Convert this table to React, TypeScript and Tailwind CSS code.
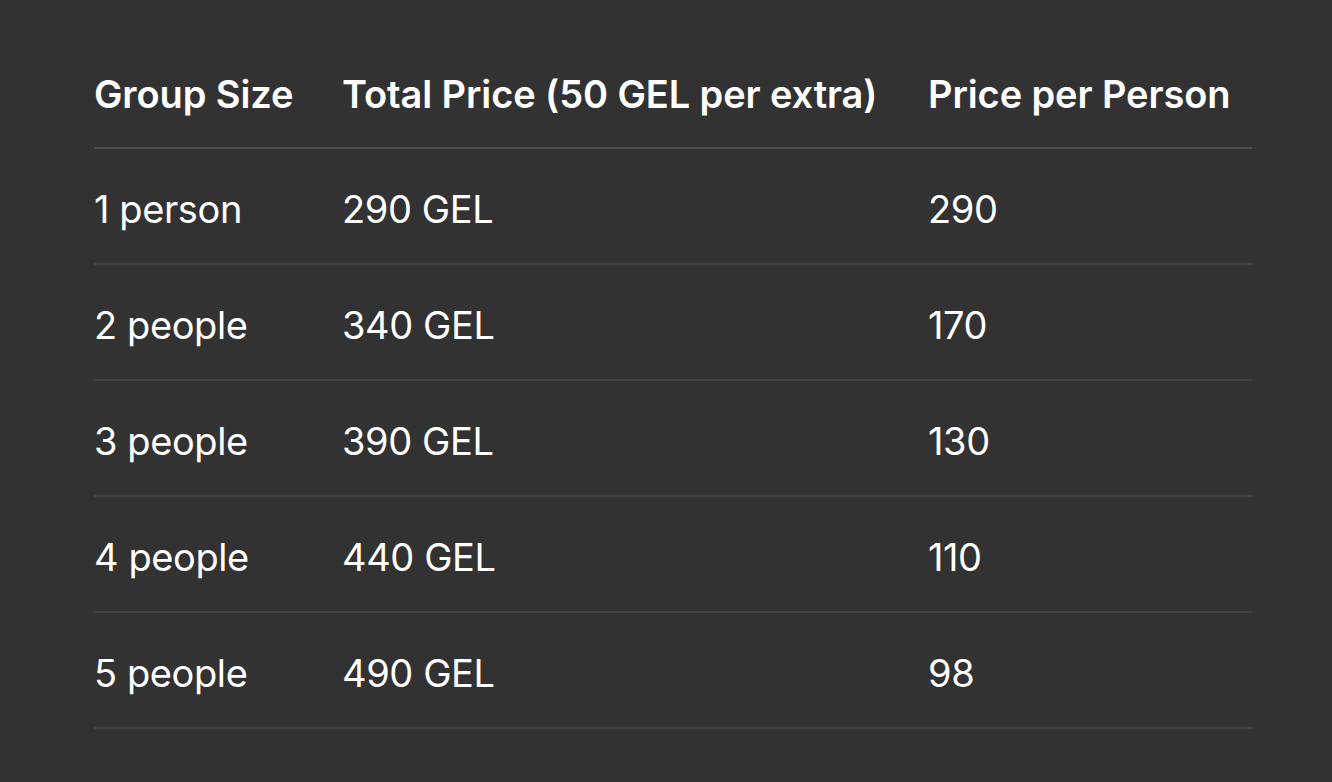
import React from "react";

const rows = [
  ["1 person", "290 GEL", "290"],
  ["2 people", "340 GEL", "170"],
  ["3 people", "390 GEL", "130"],
  ["4 people", "440 GEL", "110"],
  ["5 people", "490 GEL", "98"],
];

const App: React.FC = () => {
  return (
    <div
      className="min-h-[782px] bg-[#323232] text-white pt-[33px] pl-[94px]"
      style={{ fontFamily: "Inter, 'Noto Sans', sans-serif" }}
    >
      <div className="w-[1158px] text-[38px] tracking-[-0.2px]">
        <div className="grid grid-cols-[248px_586px_324px] h-[116px] pt-[9px] items-center font-semibold tracking-[-0.1px] border-b-2 border-[#4f4f4f]">
          <div>Group Size</div>
          <div>Total Price (50 GEL per extra)</div>
          <div>Price per Person</div>
        </div>
        {rows.map((r) => (
          <div
            key={r[0]}
            className="grid grid-cols-[248px_586px_324px] h-[116px] pt-[7px] items-center tracking-[-0.4px] border-b-2 border-[#424242]"
          >
            <div>{r[0]}</div>
            <div>{r[1]}</div>
            <div>{r[2]}</div>
          </div>
        ))}
      </div>
    </div>
  );
};

export default App;
